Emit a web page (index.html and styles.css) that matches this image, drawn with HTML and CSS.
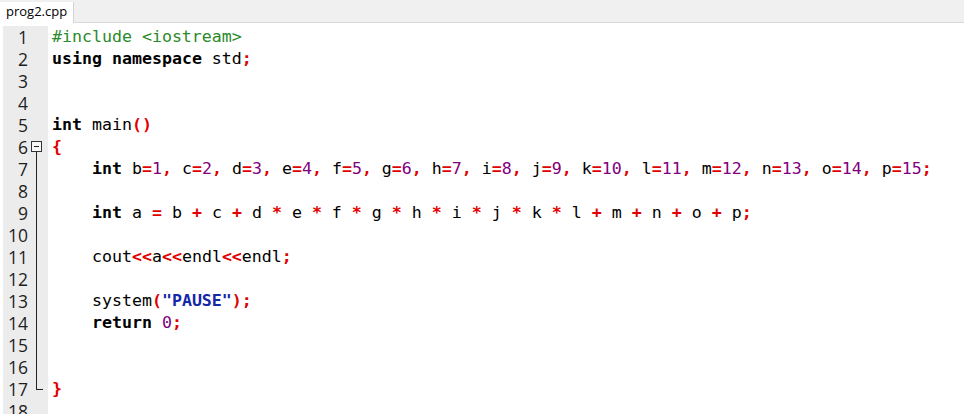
FILE: index.html
```html
<!DOCTYPE html>
<html>
<head>
<meta charset="utf-8">
<title>prog2.cpp</title>
<link rel="stylesheet" href="styles.css">
</head>
<body>
<div class="tabbar"><div class="tab">prog2.cpp</div></div>
<div class="editor">
  <div class="line"><span class="ln">1</span><span class="fold"></span><span class="code"><span class="pp">#include &lt;iostream&gt;</span></span></div>
  <div class="line"><span class="ln">2</span><span class="fold"></span><span class="code"><span class="kw">using</span> <span class="kw">namespace</span> std<span class="op">;</span></span></div>
  <div class="line"><span class="ln">3</span><span class="fold"></span><span class="code"></span></div>
  <div class="line"><span class="ln">4</span><span class="fold"></span><span class="code"></span></div>
  <div class="line"><span class="ln">5</span><span class="fold"></span><span class="code"><span class="kw">int</span> main<span class="op">()</span></span></div>
  <div class="line"><span class="ln">6</span><span class="fold fold-open"><span class="minus"></span></span><span class="code"><span class="op">{</span></span></div>
  <div class="line"><span class="ln">7</span><span class="fold fold-body"></span><span class="code">    <span class="kw">int</span> b<span class="op">=</span><span class="num">1</span><span class="op">,</span> c<span class="op">=</span><span class="num">2</span><span class="op">,</span> d<span class="op">=</span><span class="num">3</span><span class="op">,</span> e<span class="op">=</span><span class="num">4</span><span class="op">,</span> f<span class="op">=</span><span class="num">5</span><span class="op">,</span> g<span class="op">=</span><span class="num">6</span><span class="op">,</span> h<span class="op">=</span><span class="num">7</span><span class="op">,</span> i<span class="op">=</span><span class="num">8</span><span class="op">,</span> j<span class="op">=</span><span class="num">9</span><span class="op">,</span> k<span class="op">=</span><span class="num">10</span><span class="op">,</span> l<span class="op">=</span><span class="num">11</span><span class="op">,</span> m<span class="op">=</span><span class="num">12</span><span class="op">,</span> n<span class="op">=</span><span class="num">13</span><span class="op">,</span> o<span class="op">=</span><span class="num">14</span><span class="op">,</span> p<span class="op">=</span><span class="num">15</span><span class="op">;</span></span></div>
  <div class="line"><span class="ln">8</span><span class="fold fold-body"></span><span class="code"></span></div>
  <div class="line"><span class="ln">9</span><span class="fold fold-body"></span><span class="code">    <span class="kw">int</span> a <span class="op">=</span> b <span class="op">+</span> c <span class="op">+</span> d <span class="op">*</span> e <span class="op">*</span> f <span class="op">*</span> g <span class="op">*</span> h <span class="op">*</span> i <span class="op">*</span> j <span class="op">*</span> k <span class="op">*</span> l <span class="op">+</span> m <span class="op">+</span> n <span class="op">+</span> o <span class="op">+</span> p<span class="op">;</span></span></div>
  <div class="line"><span class="ln">10</span><span class="fold fold-body"></span><span class="code"></span></div>
  <div class="line"><span class="ln">11</span><span class="fold fold-body"></span><span class="code">    cout<span class="op">&lt;&lt;</span>a<span class="op">&lt;&lt;</span>endl<span class="op">&lt;&lt;</span>endl<span class="op">;</span></span></div>
  <div class="line"><span class="ln">12</span><span class="fold fold-body"></span><span class="code"></span></div>
  <div class="line"><span class="ln">13</span><span class="fold fold-body"></span><span class="code">    system<span class="op">(</span><span class="str">"PAUSE"</span><span class="op">);</span></span></div>
  <div class="line"><span class="ln">14</span><span class="fold fold-body"></span><span class="code">    <span class="kw">return</span> <span class="num">0</span><span class="op">;</span></span></div>
  <div class="line"><span class="ln">15</span><span class="fold fold-body"></span><span class="code"></span></div>
  <div class="line"><span class="ln">16</span><span class="fold fold-body"></span><span class="code"></span></div>
  <div class="line"><span class="ln">17</span><span class="fold fold-end"></span><span class="code"><span class="op">}</span></span></div>
  <div class="line"><span class="ln">18</span><span class="fold"></span><span class="code"></span></div>
</div>
</body>
</html>
```

FILE: styles.css
```css
html, body {
  margin: 0;
  padding: 0;
  background: #ffffff;
}
body {
  width: 964px;
  height: 414px;
  overflow: hidden;
}
.tabbar {
  height: 22px;
  background: #f0f0f0;
  border-bottom: 1px solid #d9d9d9;
  display: flex;
  align-items: flex-end;
}
.tab {
  height: 21px;
  box-sizing: border-box;
  padding: 0 6px 0 6px;
  background: #ffffff;
  border-right: 1px solid #d4d4d4;
  font-family: "Open Sans", "Noto Sans", sans-serif;
  font-size: 13px;
  line-height: 19px;
  color: #000;
  margin-bottom: -1px;
}
.editor {
  padding-top: 3px;
}
.line {
  display: flex;
  height: 22px;
}
.ln {
  margin-left: 3px;
  width: 25px;
  box-sizing: border-box;
  padding-right: 0;
  background: #ececec;
  text-align: right;
  font-family: "Open Sans", "Noto Sans", sans-serif;
  font-size: 17.5px;
  line-height: 22px;
  color: #1e1e1e;
}
.fold {
  width: 20px;
  background: #ececec;
  position: relative;
}
.fold-open::before {
  content: "";
  position: absolute;
  left: 3px;
  top: 5px;
  width: 11px;
  height: 11px;
  box-sizing: border-box;
  border: 1px solid #333;
  background: #f7f7f7;
}
.fold-open .minus {
  position: absolute;
  left: 6px;
  top: 10px;
  width: 5px;
  height: 1px;
  background: #222;
}
.fold-open::after {
  content: "";
  position: absolute;
  left: 8px;
  top: 16px;
  width: 1px;
  height: 6px;
  background: #222;
}
.fold-body::before {
  content: "";
  position: absolute;
  left: 8px;
  top: 0;
  width: 1px;
  height: 22px;
  background: #222;
}
.fold-end::before {
  content: "";
  position: absolute;
  left: 8px;
  top: 0;
  width: 7px;
  height: 12px;
  box-sizing: border-box;
  border-left: 1px solid #222;
  border-bottom: 1px solid #222;
}
.code {
  flex: 1;
  padding-left: 4px;
  white-space: pre;
  font-family: "DejaVu Sans Mono", "Liberation Mono", monospace;
  font-size: 16.6px;
  line-height: 22px;
  color: #000;
}
.kw { font-weight: bold; color: #000; }
.op { font-weight: bold; color: #e00000; }
.num { color: #800080; }
.str { font-weight: bold; color: #1428a8; }
.pp { color: #2a8a2a; }
```
